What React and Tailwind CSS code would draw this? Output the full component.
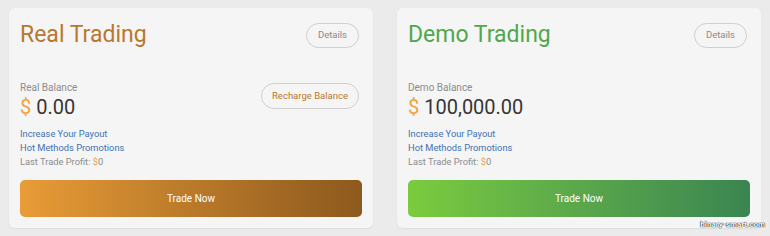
const accounts = [
  {
    title: "Real Trading",
    titleColor: "text-[#b8782e]",
    label: "Real Balance",
    amount: "0.00",
    recharge: true,
    gradient: "bg-gradient-to-r from-[#e99c37] to-[#8d591d]",
  },
  {
    title: "Demo Trading",
    titleColor: "text-[#4fa84b]",
    label: "Demo Balance",
    amount: "100,000.00",
    recharge: false,
    gradient: "bg-gradient-to-r from-[#7bcb3d] to-[#3a8550]",
  },
];

function AccountCard({ a }) {
  return (
    <div className="flex flex-col rounded-[6px] bg-[#f5f5f5] px-[11px] pt-[14px] pb-[11px] shadow-[0_1px_2px_rgba(0,0,0,0.06)]">
      <div className="flex items-center justify-between pr-[3px]">
        <h2 className={`text-[23px] leading-[26px] font-normal ${a.titleColor}`}>{a.title}</h2>
        <button className="h-[25px] w-[53px] rounded-full border border-[#cfcfcf] text-[9.5px] text-[#8a8a8a]">
          Details
        </button>
      </div>

      <div className="mt-[33px] flex items-start justify-between pr-[3px]">
        <div>
          <div className="text-[10px] leading-[14px] text-[#8c8c8c]">{a.label}</div>
          <div className="text-[20px] leading-[24px] text-[#353535]">
            <span className="text-[#f2a23a]">$</span> {a.amount}
          </div>
        </div>
        {a.recharge && (
          <button className="mt-[2px] h-[26px] w-[98px] rounded-full border border-[#cfcfcf] text-[9.5px] text-[#b8782e]">
            Recharge Balance
          </button>
        )}
      </div>

      <div className="mt-[8px] text-[9.3px] leading-[14px]">
        <div className="text-[#3f72b3]">Increase Your Payout</div>
        <div className="text-[#3f72b3]">Hot Methods Promotions</div>
        <div className="text-[#8c8c8c]">
          Last Trade Profit: <span className="text-[#f2a23a]">$</span>0
        </div>
      </div>

      <button
        className={`mt-[11px] h-[37px] w-full rounded-[5px] text-[10px] text-white ${a.gradient}`}
      >
        Trade Now
      </button>
    </div>
  );
}

export default function App() {
  return (
    <div
      className="relative h-[236px] w-[770px] bg-[#ebebeb] px-[9px] pt-[8px]"
      style={{ fontFamily: "Roboto, 'Liberation Sans', sans-serif" }}
    >
      <div className="grid grid-cols-2 gap-[24px]">
        {accounts.map((a) => (
          <AccountCard key={a.title} a={a} />
        ))}
      </div>
      <span className="absolute right-[5px] bottom-[6px] text-[8px] leading-[10px] font-bold text-white [text-shadow:0_0_1px_#000,0_0_1px_#000]">
        binary-smart.com
      </span>
    </div>
  );
}
